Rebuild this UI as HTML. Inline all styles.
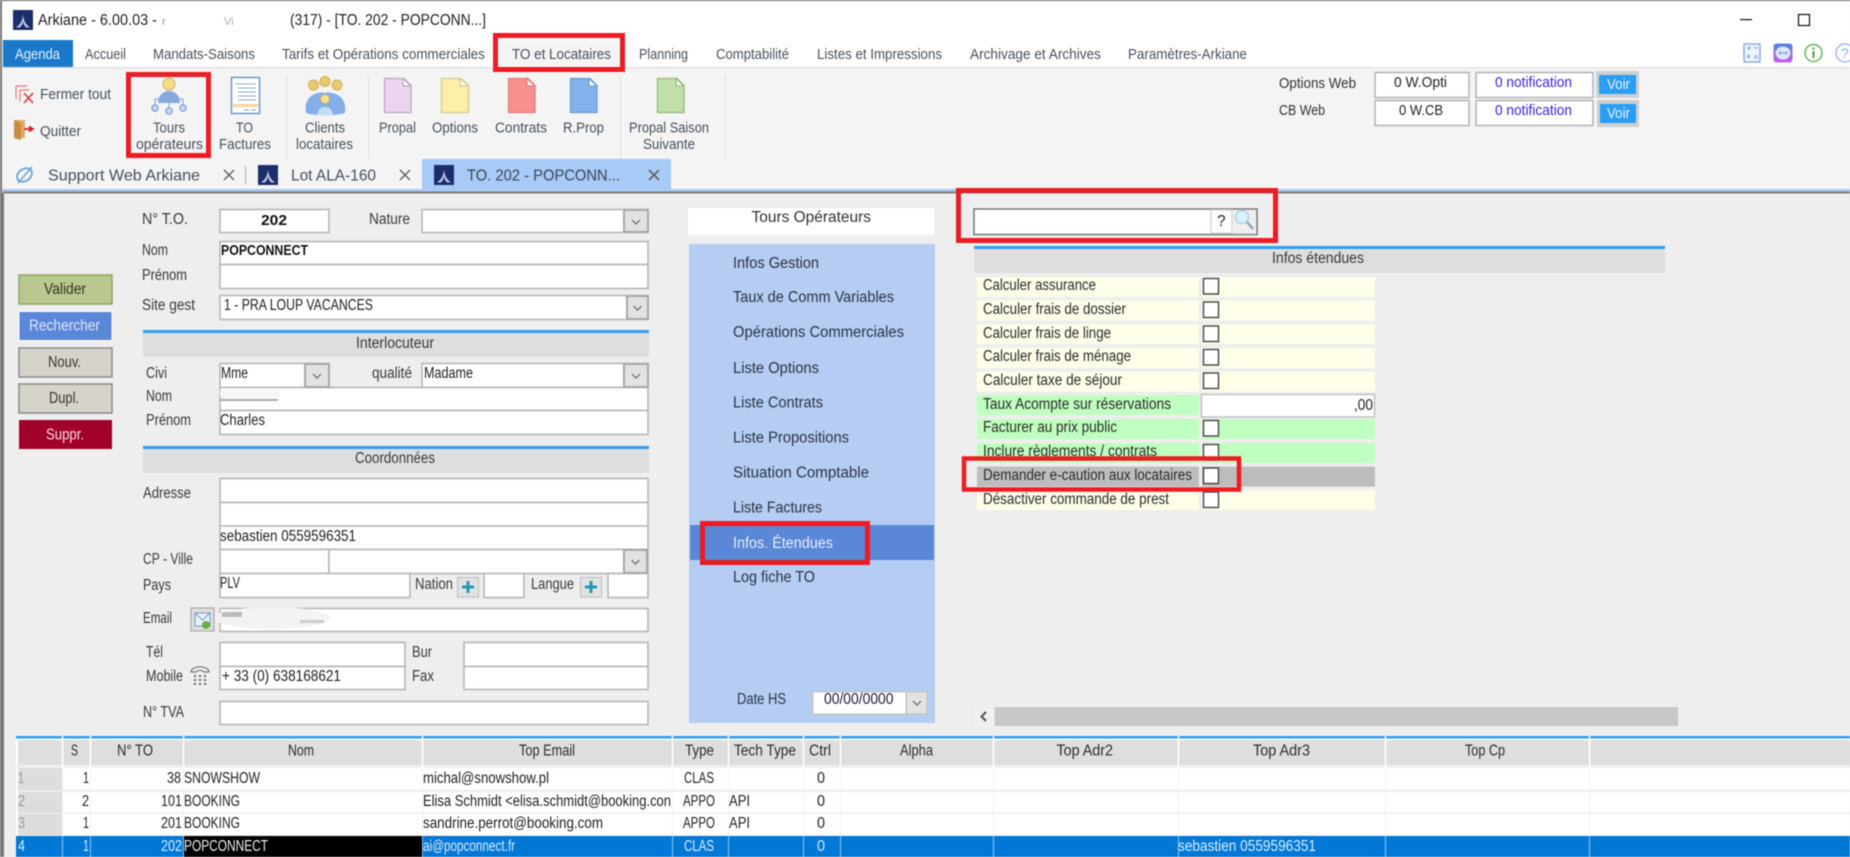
<!DOCTYPE html>
<html lang="fr"><head><meta charset="utf-8"><title>Arkiane</title>
<style>
html,body{margin:0;padding:0;width:1850px;height:857px;overflow:hidden;background:#eee}
svg{display:block;filter:blur(.4px)}
text{font-family:"Liberation Sans",sans-serif;font-size:15.5px;fill:#3a3a3a}
.t{font-size:15px;fill:#48505c}
.b{font-weight:bold;fill:#111;font-size:15px}
.i{fill:#fff;stroke:#b6b6ba;stroke-width:1.6}
.d{fill:#e2e2e2;stroke:#a8a8a8;stroke-width:2}
.c{fill:none;stroke:#666;stroke-width:1.2}
.r{fill:none;stroke:#ed1c24;stroke-width:5}
.ck{fill:#fff;stroke:#444;stroke-width:1.4}
</style></head><body>
<svg width="1850" height="857" viewBox="0 0 1850 857" xmlns="http://www.w3.org/2000/svg">
<defs>
<g id="logo"><rect width="20" height="20" fill="#1c2d6b"/><path d="M10 3C10 9 8 14 3 17.500L7 17.500C9 15.500 10 13 10 11C10 13 11 15.500 13 17.500L17 17.500C12 14 10 9 10 3Z" fill="#b4c6e4"/></g>
<path id="chev" d="M-4-2L0 2L4-2" fill="none" stroke="#666" stroke-width="1.2"/>
<linearGradient id="tv" x1="0" y1="0" x2="0" y2="1"><stop offset="0" stop-color="#4f86e6"/><stop offset="1" stop-color="#d05ce8"/></linearGradient>
</defs>
<rect width="1850" height="857" fill="#eee"/>
<!-- title bar -->
<rect width="1850" height="68" fill="#fff"/><rect width="1850" height="1" fill="#666"/>
<rect width="2" height="857" fill="#777"/>
<use href="#logo" x="13" y="10"/>
<text x="38" y="25" style="fill:#222" textLength="119" lengthAdjust="spacingAndGlyphs">Arkiane - 6.00.03 -</text>
<text x="162" y="25" style="fill:#999;font-size:11px">r</text>
<text x="224" y="25" style="fill:#aaa;font-size:11px">Vi</text>
<text x="290" y="25" style="fill:#222" textLength="196" lengthAdjust="spacingAndGlyphs">(317) - [TO. 202 - POPCONN...]</text>
<rect x="1740" y="19" width="12" height="1.200" fill="#111"/><rect x="1798.500" y="14.500" width="11" height="11" fill="#fff" stroke="#111" stroke-width="1.2"/>
<!-- ribbon tabs -->
<rect x="3" y="40" width="70" height="27" fill="#1979ca"/>
<text x="15" y="59" class="t" style="fill:#e6f1fb" textLength="45" lengthAdjust="spacingAndGlyphs">Agenda</text>
<g>
<text x="85" y="59" class="t" textLength="41" lengthAdjust="spacingAndGlyphs">Accueil</text>
<text x="153" y="59" class="t" textLength="102" lengthAdjust="spacingAndGlyphs">Mandats-Saisons</text>
<text x="282" y="59" class="t" textLength="203" lengthAdjust="spacingAndGlyphs">Tarifs et Opérations commerciales</text>
<text x="639" y="59" class="t" textLength="49" lengthAdjust="spacingAndGlyphs">Planning</text>
<text x="716" y="59" class="t" textLength="73" lengthAdjust="spacingAndGlyphs">Comptabilité</text>
<text x="817" y="59" class="t" textLength="125" lengthAdjust="spacingAndGlyphs">Listes et Impressions</text>
<text x="970" y="59" class="t" textLength="131" lengthAdjust="spacingAndGlyphs">Archivage et Archives</text>
<text x="1128" y="59" class="t" textLength="119" lengthAdjust="spacingAndGlyphs">Paramètres-Arkiane</text>
</g>
<!-- top-right icons -->
<rect x="1744" y="44" width="16" height="18" fill="#eef3fd" stroke="#7fa2e8" stroke-width="1.3"/>
<path d="M1747 48h4M1749 46v4M1754 48h4M1747 55l3 3M1750 55l-3 3M1754 56h4M1754 58h4" stroke="#7fa2e8" stroke-width="1" fill="none"/>
<rect x="1773.500" y="43.500" width="19" height="19" rx="3" fill="url(#tv)"/>
<ellipse cx="1783" cy="53" rx="7.500" ry="6.500" fill="#dfe7fa"/><path d="M1779 53h8M1780.500 51.500L1779 53l1.500 1.500M1785.500 51.500L1787 53l-1.500 1.500" stroke="#7f9fe8" stroke-width="1" fill="none"/>
<circle cx="1813.500" cy="53" r="8.500" fill="none" stroke="#65b565" stroke-width="1.5"/><rect x="1812.500" y="51" width="2" height="7" fill="#4aa04a"/><rect x="1812.500" y="47.500" width="2" height="2" fill="#4aa04a"/>
<circle cx="1845" cy="53" r="9" fill="none" stroke="#9db8ee" stroke-width="1.5"/><text x="1841" y="58" style="fill:#8facea;font-size:14px">?</text>
<!-- ribbon -->
<rect x="2" y="67" width="1848" height="122" fill="#f4f4f4"/><rect x="2" y="67" width="1848" height="1.500" fill="#e2e2e2"/>
<rect x="500" y="40" width="120" height="29" fill="#f4f4f4"/>
<text x="512" y="59" class="t" textLength="99" lengthAdjust="spacingAndGlyphs">TO et Locataires</text>
<!-- Fermer tout -->
<path d="M27 86H16V99M20 90H29M20 90V101" fill="none" stroke="#e07b7b" stroke-width="1.2"/><path d="M24 93L33 103M33 93L24 103" stroke="#d93a3a" stroke-width="1.6"/>
<text x="40" y="99" class="t" textLength="71" lengthAdjust="spacingAndGlyphs">Fermer tout</text>
<path d="M14 120H25V138H14Z" fill="#e2ab66"/><path d="M14 120L21 123V140L14 138Z" fill="#c98c43"/><path d="M24 129H31M29 126.500L33 129L29 131.500" stroke="#d3222a" stroke-width="1.800" fill="#d3222a"/>
<text x="40" y="136" class="t" textLength="41" lengthAdjust="spacingAndGlyphs">Quitter</text>
<!-- Tours -->
<path d="M155 105V99H183V105M169 103V108" stroke="#7ea2d4" stroke-width="1" fill="none"/>
<path d="M158 103C158 87 180 87 180 103Z" fill="#86aae0"/>
<circle cx="169" cy="84" r="6" fill="#f5dc8d" stroke="#cfb35a" stroke-width="1"/>
<circle cx="155" cy="108" r="3.200" fill="#c4d8f2" stroke="#6f96cd"/><circle cx="169" cy="111" r="3.200" fill="#c4d8f2" stroke="#6f96cd"/><circle cx="183" cy="108" r="3.200" fill="#c4d8f2" stroke="#6f96cd"/>
<text x="153" y="132.500" class="t" textLength="32" lengthAdjust="spacingAndGlyphs">Tours</text>
<text x="136" y="149" class="t" textLength="67" lengthAdjust="spacingAndGlyphs">opérateurs</text>
<!-- Factures -->
<rect x="231.500" y="77.500" width="28" height="36" fill="#fff" stroke="#6f98c4" stroke-width="1.5"/>
<rect x="233" y="104" width="25" height="3" fill="#f9d2a0"/>
<path d="M235 84H256M238 88H256M238 92H256M238 96H256M238 100H256" stroke="#88a8d0" stroke-width="1"/><path d="M244 110H249M251 110H256" stroke="#6f98c4" stroke-width="1"/>
<text x="236" y="132.500" class="t" textLength="17" lengthAdjust="spacingAndGlyphs">TO</text>
<text x="219" y="149" class="t" textLength="52" lengthAdjust="spacingAndGlyphs">Factures</text>
<rect x="286" y="75" width="1" height="84" fill="#dedede"/>
<!-- Clients -->
<circle cx="313.500" cy="85" r="5" fill="#e9c96e" stroke="#cfae55"/><circle cx="325" cy="81.500" r="5" fill="#e9c96e" stroke="#cfae55"/><circle cx="337" cy="85" r="5" fill="#e9c96e" stroke="#cfae55"/>
<path d="M306 113C303 94 320 91 325 93C330 91 348 94 345 113C335 116 316 116 306 113Z" fill="#84aee8"/>
<circle cx="325" cy="99" r="4.500" fill="#f7e096" stroke="#cfae55"/><path d="M317 115C318 104 332 104 333 115Z" fill="#c3dcf6"/>
<text x="305" y="132.500" class="t" textLength="40" lengthAdjust="spacingAndGlyphs">Clients</text>
<text x="296" y="149" class="t" textLength="57" lengthAdjust="spacingAndGlyphs">locataires</text>
<rect x="368" y="75" width="1" height="84" fill="#dedede"/>
<!-- doc icons -->
<g stroke-width="1.2">
<path d="M384.500 78.500H404L411 85.500V112.500H384.500Z" fill="#ecd5ee" stroke="#bfa3c6"/><path d="M403 78.500V86H411Z" fill="#fff" stroke="#bfa3c6"/>
<path d="M441.500 78.500H461L468.500 85.500V112.500H441.500Z" fill="#fdeea8" stroke="#d9c98a"/><path d="M460 78.500V86H468.500Z" fill="#fff" stroke="#d9c98a"/>
<path d="M508.500 78.500H528L535 85.500V112.500H508.500Z" fill="#f98f8f" stroke="#e57a7a"/><path d="M527 78.500V86H535Z" fill="#fff" stroke="#e57a7a"/>
<path d="M570.500 78.500H590L597 85.500V112.500H570.500Z" fill="#82b1ec" stroke="#6a9bd8"/><path d="M589 78.500V86H597Z" fill="#fff" stroke="#6a9bd8"/>
<path d="M657.500 78.500H677L684 85.500V112.500H657.500Z" fill="#c3dfa9" stroke="#91b67a"/><path d="M676 78.500V86H684Z" fill="#fff" stroke="#91b67a"/>
</g>
<text x="379" y="132.500" class="t" textLength="37" lengthAdjust="spacingAndGlyphs">Propal</text>
<text x="432" y="132.500" class="t" textLength="46" lengthAdjust="spacingAndGlyphs">Options</text>
<text x="495" y="132.500" class="t" textLength="52" lengthAdjust="spacingAndGlyphs">Contrats</text>
<text x="563" y="132.500" class="t" textLength="41" lengthAdjust="spacingAndGlyphs">R.Prop</text>
<rect x="620" y="75" width="1" height="84" fill="#dedede"/>
<text x="629" y="132.500" class="t" textLength="80" lengthAdjust="spacingAndGlyphs">Propal Saison</text>
<text x="643" y="149" class="t" textLength="52" lengthAdjust="spacingAndGlyphs">Suivante</text>
<rect x="725" y="75" width="1" height="84" fill="#dedede"/>
<!-- web options -->
<text x="1279" y="88" class="t" style="fill:#333" textLength="77" lengthAdjust="spacingAndGlyphs">Options Web</text>
<text x="1279" y="115" class="t" style="fill:#333" textLength="46" lengthAdjust="spacingAndGlyphs">CB Web</text>
<g class="i"><rect x="1375" y="72.500" width="94" height="25"/><rect x="1375" y="100.500" width="94" height="25"/><rect x="1476" y="72.500" width="117" height="25"/><rect x="1476" y="100.500" width="117" height="25"/></g>
<text x="1394" y="87" class="t" style="fill:#222" textLength="53" lengthAdjust="spacingAndGlyphs">0 W.Opti</text>
<text x="1399" y="115" class="t" style="fill:#222" textLength="44" lengthAdjust="spacingAndGlyphs">0 W.CB</text>
<text x="1495" y="87" class="t" style="fill:#3a1fe0" textLength="77" lengthAdjust="spacingAndGlyphs">0 notification</text>
<text x="1495" y="115" class="t" style="fill:#3a1fe0" textLength="77" lengthAdjust="spacingAndGlyphs">0 notification</text>
<rect x="1596" y="71" width="43" height="27" fill="#cfcfcf"/><rect x="1599" y="75" width="37" height="19" fill="#2a9df4"/>
<rect x="1597" y="100" width="42" height="27" fill="#cfcfcf"/><rect x="1600" y="104" width="36" height="19" fill="#2a9df4"/>
<text x="1607" y="89" class="t" style="fill:#e8f4ff" textLength="23" lengthAdjust="spacingAndGlyphs">Voir</text>
<text x="1607" y="118" class="t" style="fill:#e8f4ff" textLength="23" lengthAdjust="spacingAndGlyphs">Voir</text>
<!-- doc tabs -->
<ellipse cx="24.500" cy="175" rx="8" ry="6" fill="none" stroke="#6aa0dc" stroke-width="1.800" transform="rotate(-35 24.500 175)"/><path d="M18 183L32 167" stroke="#6aa0dc" stroke-width="1.500"/>
<text x="48" y="180.500" style="fill:#44505c;font-size:16px" textLength="152" lengthAdjust="spacingAndGlyphs">Support Web Arkiane</text>
<path d="M224 170L234 180M234 170L224 180" stroke="#666" stroke-width="1.500"/><rect x="245" y="166" width="1" height="18" fill="#aaa"/>
<use href="#logo" x="258" y="165"/>
<text x="291" y="180.500" style="fill:#44505c;font-size:16px" textLength="85" lengthAdjust="spacingAndGlyphs">Lot ALA-160</text>
<path d="M400 170L410 180M410 170L400 180" stroke="#666" stroke-width="1.500"/>
<rect x="422" y="159" width="249" height="31" fill="#a8caf6"/>
<use href="#logo" x="434" y="165"/>
<text x="467" y="180.500" style="fill:#3a4656;font-size:16px" textLength="153" lengthAdjust="spacingAndGlyphs">TO. 202 - POPCONN...</text>
<path d="M649 170L659 180M659 170L649 180" stroke="#555" stroke-width="1.500"/>
<rect x="2" y="189" width="1848" height="2.500" fill="#a8caf6"/><rect x="3" y="191.500" width="1847" height="2" fill="#7e7e7e"/>
<rect x="2" y="193" width="2" height="664" fill="#777"/>
<!-- left action buttons -->
<rect x="19" y="275" width="93" height="29" fill="#b9c791" stroke="#8fa85a" stroke-width="1.500"/>
<text x="44" y="294" style="fill:#2f3a1e" textLength="42" lengthAdjust="spacingAndGlyphs">Valider</text>
<rect x="19" y="311.500" width="93" height="29" fill="#5b87d8" stroke="#fff" stroke-width="1"/>
<text x="29" y="330.500" style="fill:#dbe6ff" textLength="71" lengthAdjust="spacingAndGlyphs">Rechercher</text>
<rect x="19" y="348" width="93" height="29" fill="#d6d3cb" stroke="#8a8a8a" stroke-width="1.500"/>
<text x="48" y="367" style="fill:#3a3530" textLength="33" lengthAdjust="spacingAndGlyphs">Nouv.</text>
<rect x="19" y="384" width="93" height="29" fill="#d6d3cb" stroke="#8a8a8a" stroke-width="1.500"/>
<text x="49" y="403" style="fill:#3a3530" textLength="30" lengthAdjust="spacingAndGlyphs">Dupl.</text>
<rect x="19" y="420" width="93" height="29" fill="#a10029"/>
<text x="46" y="439.500" style="fill:#f3dfe4" textLength="38" lengthAdjust="spacingAndGlyphs">Suppr.</text>
<!-- form inputs -->
<g class="i">
<rect x="220" y="209.500" width="109" height="23"/><rect x="422" y="209.500" width="226" height="23"/>
<rect x="220" y="241.500" width="428" height="23"/><rect x="220" y="264.500" width="428" height="24"/>
<rect x="220" y="295.500" width="428" height="24"/>
<rect x="220" y="363.500" width="109" height="24"/><rect x="422" y="363.500" width="226" height="24"/>
<rect x="220" y="387.500" width="428" height="23"/><rect x="220" y="410.500" width="428" height="24"/>
<rect x="220" y="478.500" width="428" height="24"/><rect x="220" y="502.500" width="428" height="24"/><rect x="220" y="526" width="428" height="23.500"/>
<rect x="220" y="549.500" width="109" height="24"/><rect x="329" y="549.500" width="319" height="24"/>
<rect x="220" y="573.500" width="190" height="24"/><rect x="484" y="573.500" width="40" height="24"/><rect x="608" y="573.500" width="40" height="24"/>
<rect x="220" y="608.500" width="428" height="23"/>
<rect x="220" y="642.500" width="185" height="24"/><rect x="220" y="666.500" width="185" height="23"/>
<rect x="464" y="642.500" width="184" height="24"/><rect x="464" y="666.500" width="184" height="23"/>
<rect x="220" y="701.500" width="428" height="23"/>
</g>
<g class="d"><rect x="624" y="210" width="24" height="22"/><rect x="627" y="296" width="21" height="23"/><rect x="305" y="364" width="24" height="23"/><rect x="624" y="364" width="24" height="23"/><rect x="624" y="550" width="23" height="23"/></g>
<use href="#chev" x="636" y="222"/><use href="#chev" x="637.500" y="308"/><use href="#chev" x="317" y="376"/><use href="#chev" x="636" y="376"/><use href="#chev" x="635.500" y="562"/>
<!-- section heads -->
<rect x="143" y="330" width="506" height="3" fill="#2e9cf5"/><rect x="143" y="333" width="506" height="24" fill="#dedede"/>
<rect x="143" y="446" width="506" height="3" fill="#2e9cf5"/><rect x="143" y="449" width="506" height="24" fill="#dedede"/>
<text x="356" y="348" textLength="78" lengthAdjust="spacingAndGlyphs">Interlocuteur</text>
<text x="355" y="463" textLength="80" lengthAdjust="spacingAndGlyphs">Coordonnées</text>
<!-- form labels -->
<g>
<text x="142" y="224" textLength="46" lengthAdjust="spacingAndGlyphs">N° T.O.</text>
<text x="261" y="225" class="b" textLength="26" lengthAdjust="spacingAndGlyphs">202</text>
<text x="369" y="224" textLength="41" lengthAdjust="spacingAndGlyphs">Nature</text>
<text x="142" y="255" textLength="26" lengthAdjust="spacingAndGlyphs">Nom</text>
<text x="221" y="255" class="b" textLength="87" lengthAdjust="spacingAndGlyphs">POPCONNECT</text>
<text x="142" y="280" textLength="45" lengthAdjust="spacingAndGlyphs">Prénom</text>
<text x="142" y="310" textLength="53" lengthAdjust="spacingAndGlyphs">Site gest</text>
<text x="224" y="310" style="fill:#222" textLength="149" lengthAdjust="spacingAndGlyphs">1 - PRA LOUP VACANCES</text>
<text x="146" y="378" textLength="21" lengthAdjust="spacingAndGlyphs">Civi</text>
<text x="221" y="378" style="fill:#222" textLength="27" lengthAdjust="spacingAndGlyphs">Mme</text>
<text x="372" y="378" textLength="40" lengthAdjust="spacingAndGlyphs">qualité</text>
<text x="424" y="378" style="fill:#222" textLength="49" lengthAdjust="spacingAndGlyphs">Madame</text>
<text x="146" y="401" textLength="26" lengthAdjust="spacingAndGlyphs">Nom</text>
<text x="146" y="425" textLength="45" lengthAdjust="spacingAndGlyphs">Prénom</text>
<text x="220" y="425" style="fill:#222" textLength="45" lengthAdjust="spacingAndGlyphs">Charles</text>
<text x="143" y="498" textLength="48" lengthAdjust="spacingAndGlyphs">Adresse</text>
<text x="220" y="541" style="fill:#222" textLength="136" lengthAdjust="spacingAndGlyphs">sebastien 0559596351</text>
<text x="143" y="564" textLength="50" lengthAdjust="spacingAndGlyphs">CP - Ville</text>
<text x="143" y="590" textLength="28" lengthAdjust="spacingAndGlyphs">Pays</text>
<text x="220" y="588" style="fill:#222" textLength="20" lengthAdjust="spacingAndGlyphs">PLV</text>
<text x="415" y="589" textLength="38" lengthAdjust="spacingAndGlyphs">Nation</text>
<text x="531" y="589" textLength="43" lengthAdjust="spacingAndGlyphs">Langue</text>
<text x="143" y="623" textLength="29" lengthAdjust="spacingAndGlyphs">Email</text>
<text x="146" y="657" textLength="17" lengthAdjust="spacingAndGlyphs">Tél</text>
<text x="412" y="657" textLength="20" lengthAdjust="spacingAndGlyphs">Bur</text>
<text x="146" y="681" textLength="37" lengthAdjust="spacingAndGlyphs">Mobile</text>
<text x="222" y="681" style="fill:#222" textLength="119" lengthAdjust="spacingAndGlyphs">+ 33 (0) 638168621</text>
<text x="412" y="681" textLength="22" lengthAdjust="spacingAndGlyphs">Fax</text>
<text x="143" y="717" textLength="41" lengthAdjust="spacingAndGlyphs">N° TVA</text>
</g>
<rect x="220" y="399" width="58" height="2" fill="#aaa"/><rect x="220" y="388" width="60" height="10" rx="3" fill="#f6f6f6"/>
<ellipse cx="272" cy="618" rx="58" ry="11" fill="#f3f3f3"/><rect x="222" y="612" width="20" height="5" fill="#bbb"/><rect x="300" y="620" width="24" height="3" fill="#ccc"/>
<!-- plus buttons -->
<g><rect x="457.500" y="577.500" width="21" height="19.500" fill="#e2e2e2" stroke="#bbb"/><path d="M468 581V593M462 587H474" stroke="#1f9ab8" stroke-width="3"/>
<rect x="580.500" y="577.500" width="21" height="19.500" fill="#e2e2e2" stroke="#bbb"/><path d="M591 581V593M585 587H597" stroke="#1f9ab8" stroke-width="3"/></g>
<!-- mail btn -->
<rect x="191" y="608" width="23" height="23" fill="#dedede" stroke="#aaa" stroke-width="1.200"/>
<rect x="195" y="613" width="15" height="13" fill="#e8f1fb" stroke="#6f98c4"/><path d="M195 613L202.500 620L210 613" fill="none" stroke="#6f98c4"/><circle cx="206" cy="625" r="4" fill="#66ad44"/>
<!-- phone -->
<path d="M191 672C192 665 208 665 209 672L204 672C203 670 197 670 196 672Z" fill="none" stroke="#666" stroke-width="1.100"/>
<path d="M194 676h2M199 676h2M204 676h2M194 680h2M199 680h2M204 680h2M194 684h2M199 684h2M204 684h2" stroke="#555" stroke-width="1.800"/>
<!-- center menu -->
<rect x="688" y="208" width="246" height="27" fill="#fff"/>
<text x="751.500" y="222" style="fill:#333" textLength="119.500" lengthAdjust="spacingAndGlyphs">Tours Opérateurs</text>
<rect x="689" y="244" width="246" height="479" fill="#b5cdf3"/>
<rect x="690" y="525" width="244" height="35" fill="#5a87d6"/>
<g>
<text x="733" y="268" style="fill:#2a3444" textLength="86" lengthAdjust="spacingAndGlyphs">Infos Gestion</text>
<text x="733" y="302" style="fill:#2a3444" textLength="161" lengthAdjust="spacingAndGlyphs">Taux de Comm Variables</text>
<text x="733" y="337" style="fill:#2a3444" textLength="171" lengthAdjust="spacingAndGlyphs">Opérations Commerciales</text>
<text x="733" y="373" style="fill:#2a3444" textLength="86" lengthAdjust="spacingAndGlyphs">Liste Options</text>
<text x="733" y="407.500" style="fill:#2a3444" textLength="90" lengthAdjust="spacingAndGlyphs">Liste Contrats</text>
<text x="733" y="442.500" style="fill:#2a3444" textLength="116" lengthAdjust="spacingAndGlyphs">Liste Propositions</text>
<text x="733" y="477.500" style="fill:#2a3444" textLength="136" lengthAdjust="spacingAndGlyphs">Situation Comptable</text>
<text x="733" y="512.500" style="fill:#2a3444" textLength="89" lengthAdjust="spacingAndGlyphs">Liste Factures</text>
<text x="733" y="548" style="fill:#e4ecfb" textLength="100" lengthAdjust="spacingAndGlyphs">Infos. Étendues</text>
<text x="733" y="582" style="fill:#2a3444" textLength="82" lengthAdjust="spacingAndGlyphs">Log fiche TO</text>
<text x="737" y="704" style="fill:#2a3444" textLength="49" lengthAdjust="spacingAndGlyphs">Date HS</text>
</g>
<rect x="812" y="691" width="116" height="24" fill="#c4c4c4"/><rect x="813.500" y="692.500" width="92" height="21" fill="#fff"/><rect x="907" y="692.500" width="19.500" height="21" fill="#e2e2e2"/>
<use href="#chev" x="917" y="703"/>
<text x="824" y="704" style="fill:#1a1a3a" textLength="69.500" lengthAdjust="spacingAndGlyphs">00/00/0000</text>
<!-- search -->
<rect x="974" y="209" width="283" height="25.500" fill="#fff" stroke="#777" stroke-width="1.500"/>
<rect x="1211" y="210" width="21" height="23" fill="#fff" stroke="#d8d8d8" stroke-width="1.500"/><rect x="1233" y="210" width="23" height="24" fill="#eee"/>
<text x="1217" y="226" style="fill:#222">?</text>
<circle cx="1242" cy="217" r="6.500" fill="#dcf0fb" stroke="#a8d4ee" stroke-width="1.500"/><path d="M1247 222L1253 229" stroke="#9aa8b4" stroke-width="2.500"/>
<!-- infos etendues -->
<rect x="974" y="246" width="691" height="3" fill="#2e9cf5"/><rect x="974" y="249" width="691" height="24" fill="#dedede"/>
<text x="1272" y="263" textLength="92" lengthAdjust="spacingAndGlyphs">Infos étendues</text>
<g fill="#fdfde8">
<rect x="977" y="277" width="222" height="20"/><rect x="1202" y="277" width="173" height="20"/>
<rect x="977" y="300.500" width="222" height="20"/><rect x="1202" y="300.500" width="173" height="20"/>
<rect x="977" y="324" width="222" height="20"/><rect x="1202" y="324" width="173" height="20"/>
<rect x="977" y="348" width="222" height="20"/><rect x="1202" y="348" width="173" height="20"/>
<rect x="977" y="371.500" width="222" height="20"/><rect x="1202" y="371.500" width="173" height="20"/>
<rect x="977" y="490" width="222" height="20"/><rect x="1202" y="490" width="173" height="20"/>
</g>
<g fill="#bfffbf">
<rect x="977" y="395" width="222" height="20"/>
<rect x="977" y="419" width="222" height="20"/><rect x="1202" y="419" width="173" height="20"/>
<rect x="977" y="443" width="222" height="20"/><rect x="1202" y="443" width="173" height="20"/>
</g>
<g fill="#bdbdbd"><rect x="977" y="466.500" width="222" height="20"/><rect x="1202" y="466.500" width="173" height="20"/></g>
<rect x="1201.500" y="394.500" width="173" height="22.500" fill="#fff" stroke="#c0c0c4" stroke-width="1.500"/>
<text x="1354" y="410" style="fill:#222" textLength="19" lengthAdjust="spacingAndGlyphs">,00</text>
<g class="ck">
<rect x="1203.500" y="278.500" width="15" height="15.500"/><rect x="1203.500" y="302" width="15" height="15.500"/><rect x="1203.500" y="326" width="15" height="15.500"/><rect x="1203.500" y="349.500" width="15" height="15.500"/><rect x="1203.500" y="373" width="15" height="15.500"/>
<rect x="1203.500" y="420.500" width="15" height="15.500"/><rect x="1203.500" y="444.500" width="15" height="15.500"/><rect x="1203.500" y="468" width="15" height="15.500"/><rect x="1203.500" y="492" width="15" height="15.500"/>
</g>
<g>
<text x="983" y="290" style="fill:#2c2c2c" textLength="113" lengthAdjust="spacingAndGlyphs">Calculer assurance</text>
<text x="983" y="314" style="fill:#2c2c2c" textLength="143" lengthAdjust="spacingAndGlyphs">Calculer frais de dossier</text>
<text x="983" y="338" style="fill:#2c2c2c" textLength="128" lengthAdjust="spacingAndGlyphs">Calculer frais de linge</text>
<text x="983" y="361" style="fill:#2c2c2c" textLength="148" lengthAdjust="spacingAndGlyphs">Calculer frais de ménage</text>
<text x="983" y="385" style="fill:#2c2c2c" textLength="139" lengthAdjust="spacingAndGlyphs">Calculer taxe de séjour</text>
<text x="983" y="409" style="fill:#2c2c2c" textLength="188" lengthAdjust="spacingAndGlyphs">Taux Acompte sur réservations</text>
<text x="983" y="432" style="fill:#2c2c2c" textLength="134" lengthAdjust="spacingAndGlyphs">Facturer au prix public</text>
<text x="983" y="456" style="fill:#2c2c2c" textLength="174" lengthAdjust="spacingAndGlyphs">Inclure règlements / contrats</text>
<text x="983" y="480" style="fill:#2c2c2c" textLength="209" lengthAdjust="spacingAndGlyphs">Demander e-caution aux locataires</text>
<text x="983" y="504" style="fill:#2c2c2c" textLength="186" lengthAdjust="spacingAndGlyphs">Désactiver commande de prest</text>
</g>
<!-- scrollbar -->
<rect x="973" y="706" width="705" height="21" fill="#f0f0f0"/><rect x="994.500" y="707" width="683.500" height="19" fill="#c8c8c8"/>
<path d="M986 712L981.500 716.500L986 721" fill="none" stroke="#555" stroke-width="2"/>
<!-- grid -->
<rect x="16" y="736" width="1834" height="2.500" fill="#2e9cf5"/>
<rect x="16" y="738.500" width="1834" height="118.500" fill="#fff"/>
<rect x="18" y="740" width="1832" height="25" fill="#dedede"/>
<rect x="16" y="765" width="1834" height="3" fill="#efefef"/>
<g fill="#ececec"><rect x="18" y="790" width="1832" height="2"/><rect x="18" y="812.500" width="1832" height="1.500"/><rect x="18" y="835" width="1832" height="1"/></g>
<g fill="#ddd"><rect x="18" y="768" width="44" height="22"/><rect x="18" y="792" width="44" height="20.500"/><rect x="18" y="814" width="44" height="21"/></g>
<rect x="16" y="836" width="1834" height="21" fill="#0078d7"/>
<rect x="184" y="836" width="238" height="21" fill="#000"/>
<path d="M62.500 736V768M90.500 736V768M183.500 736V768M422.500 736V768M672.500 736V768M728.500 736V768M803.500 736V768M840.500 736V768M993.500 736V768M1178.500 736V768M1385.500 736V768M1589.500 736V768" stroke="#fff" stroke-width="1.500"/>
<path d="M62.500 768V836M90.500 768V836M183.500 768V836M422.500 768V836M672.500 768V836M728.500 768V836M803.500 768V836M840.500 768V836M993.500 768V836M1178.500 768V836M1385.500 768V836M1589.500 768V836" stroke="#efefef" stroke-width="1"/>
<path d="M62.500 836V857M90.500 836V857M183.500 836V857M422.500 836V857M672.500 836V857M728.500 836V857M803.500 836V857M840.500 836V857M993.500 836V857M1178.500 836V857M1385.500 836V857M1589.500 836V857" stroke="#8fc4ee" stroke-width="1"/>
<g>
<text x="71" y="755.500" style="fill:#2c2c2c" textLength="7" lengthAdjust="spacingAndGlyphs">S</text>
<text x="117" y="755.500" style="fill:#2c2c2c" textLength="36" lengthAdjust="spacingAndGlyphs">N° TO</text>
<text x="288" y="755.500" style="fill:#2c2c2c" textLength="26" lengthAdjust="spacingAndGlyphs">Nom</text>
<text x="519" y="755.500" style="fill:#2c2c2c" textLength="56" lengthAdjust="spacingAndGlyphs">Top Email</text>
<text x="685" y="755.500" style="fill:#2c2c2c" textLength="29" lengthAdjust="spacingAndGlyphs">Type</text>
<text x="734" y="755.500" style="fill:#2c2c2c" textLength="62" lengthAdjust="spacingAndGlyphs">Tech Type</text>
<text x="809" y="755.500" style="fill:#2c2c2c" textLength="22" lengthAdjust="spacingAndGlyphs">Ctrl</text>
<text x="900" y="755.500" style="fill:#2c2c2c" textLength="33" lengthAdjust="spacingAndGlyphs">Alpha</text>
<text x="1056.500" y="755.500" style="fill:#2c2c2c" textLength="56.500" lengthAdjust="spacingAndGlyphs">Top Adr2</text>
<text x="1253" y="755.500" style="fill:#2c2c2c" textLength="57" lengthAdjust="spacingAndGlyphs">Top Adr3</text>
<text x="1465" y="755.500" style="fill:#2c2c2c" textLength="40" lengthAdjust="spacingAndGlyphs">Top Cp</text>
</g>
<g>
<text x="18" y="783" style="fill:#999" textLength="6" lengthAdjust="spacingAndGlyphs">1</text><text x="83" y="783" style="fill:#222" textLength="6" lengthAdjust="spacingAndGlyphs">1</text><text x="167" y="783" style="fill:#222" textLength="14" lengthAdjust="spacingAndGlyphs">38</text><text x="184" y="783" style="fill:#222" textLength="76" lengthAdjust="spacingAndGlyphs">SNOWSHOW</text><text x="423" y="783" style="fill:#222" textLength="126" lengthAdjust="spacingAndGlyphs">michal@snowshow.pl</text><text x="684" y="783" style="fill:#222" textLength="30" lengthAdjust="spacingAndGlyphs">CLAS</text><text x="817" y="783" style="fill:#222" textLength="8" lengthAdjust="spacingAndGlyphs">0</text>
<text x="18" y="806" style="fill:#999" textLength="7" lengthAdjust="spacingAndGlyphs">2</text><text x="82" y="806" style="fill:#222" textLength="7" lengthAdjust="spacingAndGlyphs">2</text><text x="161" y="806" style="fill:#222" textLength="21" lengthAdjust="spacingAndGlyphs">101</text><text x="184" y="806" style="fill:#222" textLength="56" lengthAdjust="spacingAndGlyphs">BOOKING</text><text x="423" y="806" style="fill:#222" textLength="248" lengthAdjust="spacingAndGlyphs">Elisa Schmidt &lt;elisa.schmidt@booking.con</text><text x="683" y="806" style="fill:#222" textLength="32" lengthAdjust="spacingAndGlyphs">APPO</text><text x="729" y="806" style="fill:#222" textLength="21" lengthAdjust="spacingAndGlyphs">API</text><text x="817" y="806" style="fill:#222" textLength="8" lengthAdjust="spacingAndGlyphs">0</text>
<text x="18" y="828" style="fill:#999" textLength="7" lengthAdjust="spacingAndGlyphs">3</text><text x="83" y="828" style="fill:#222" textLength="6" lengthAdjust="spacingAndGlyphs">1</text><text x="161" y="828" style="fill:#222" textLength="21" lengthAdjust="spacingAndGlyphs">201</text><text x="184" y="828" style="fill:#222" textLength="56" lengthAdjust="spacingAndGlyphs">BOOKING</text><text x="423" y="828" style="fill:#222" textLength="180" lengthAdjust="spacingAndGlyphs">sandrine.perrot@booking.com</text><text x="683" y="828" style="fill:#222" textLength="32" lengthAdjust="spacingAndGlyphs">APPO</text><text x="729" y="828" style="fill:#222" textLength="21" lengthAdjust="spacingAndGlyphs">API</text><text x="817" y="828" style="fill:#222" textLength="8" lengthAdjust="spacingAndGlyphs">0</text>
<text x="18" y="851" style="fill:#dcecfa" textLength="7" lengthAdjust="spacingAndGlyphs">4</text><text x="83" y="851" style="fill:#dcecfa" textLength="6" lengthAdjust="spacingAndGlyphs">1</text><text x="161" y="851" style="fill:#dcecfa" textLength="21" lengthAdjust="spacingAndGlyphs">202</text><text x="184" y="851" style="fill:#eee" textLength="84" lengthAdjust="spacingAndGlyphs">POPCONNECT</text><text x="423" y="851" style="fill:#dcecfa" textLength="92" lengthAdjust="spacingAndGlyphs">ai@popconnect.fr</text><text x="684" y="851" style="fill:#dcecfa" textLength="30" lengthAdjust="spacingAndGlyphs">CLAS</text><text x="817" y="851" style="fill:#dcecfa" textLength="8" lengthAdjust="spacingAndGlyphs">0</text><text x="1178" y="851" style="fill:#dcecfa" textLength="138" lengthAdjust="spacingAndGlyphs">sebastien 0559596351</text>
</g>
<!-- red annotations -->
<rect x="495.500" y="35.500" width="127" height="34" class="r"/>
<rect x="128.500" y="74.500" width="80" height="81" class="r"/>
<rect x="958.500" y="190.500" width="317" height="50" class="r"/>
<rect x="702.500" y="523.500" width="165" height="39" class="r"/>
<rect x="964" y="458.500" width="275" height="31" class="r" style="stroke-width:4.500"/>
</svg>
</body></html>
